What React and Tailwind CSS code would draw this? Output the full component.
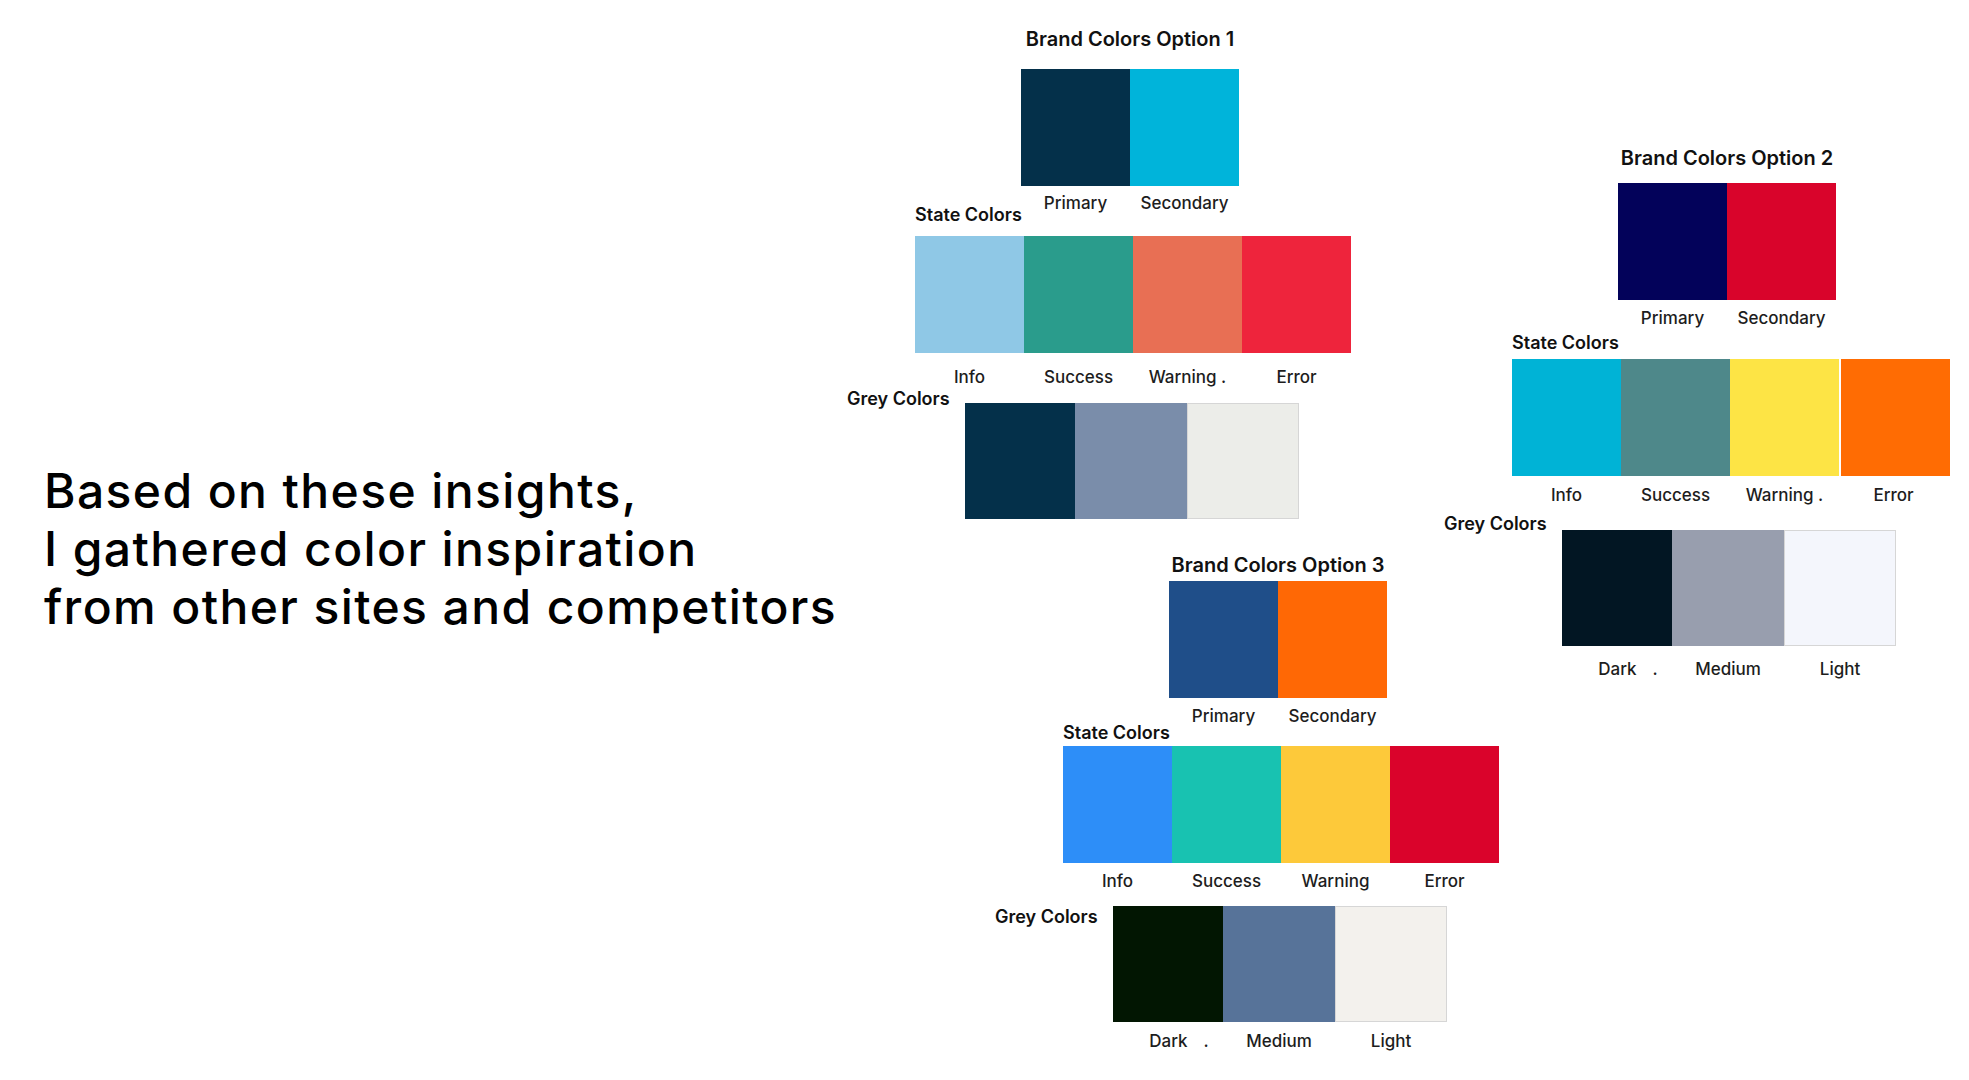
import React from "react";

// palette data, one entry per brand option
const OPTIONS = {
  one: {
    title: "Brand Colors Option 1",
    brand: ["#04304a", "#00b4da"],
    state: ["#8fc8e6", "#2a9c8c", "#e86f54", "#ee243c"],
    grey: ["#04304a", "#7a8daa", "#ecede9"],
    greyLabels: false,
  },
  two: {
    title: "Brand Colors Option 2",
    brand: ["#03025a", "#d9042b"],
    state: ["#00b3d6", "#4e888a", "#fde445", "#ff6c03"],
    grey: ["#021623", "#989eae", "#f4f6fc"],
    greyLabels: true,
  },
  three: {
    title: "Brand Colors Option 3",
    brand: ["#1f4e89", "#ff6805"],
    state: ["#2d8ef8", "#18c2b1", "#fdc93a", "#da032b"],
    grey: ["#021602", "#577399", "#f3f1ed"],
    greyLabels: true,
    plainWarning: true,
  },
};

const Swatch = ({ color, w = "w-[109px]", h = "h-[117px]", light }) => (
  <div
    className={`${w} ${h} shrink-0 ${light ? "border border-[#d6d6d6]" : ""}`}
    style={{ backgroundColor: color }}
  />
);

const Label = ({ children, w = "w-[109px]" }) => (
  <div className={`${w} shrink-0 text-center text-[17px] leading-[22px] font-medium text-[#1d1d1d] whitespace-nowrap`}>
    {children}
  </div>
);

// s = spacing set for each group (they are not perfectly regular on the slide)
const Palette = ({ data, s }) => (
  <div className="flex flex-col">
    {/* title */}
    <div className="ml-[174px] w-[218px] text-center text-[20px] leading-[26px] font-semibold text-[#111] whitespace-nowrap">
      {data.title}
    </div>

    {/* brand */}
    <div className={`ml-[174px] flex ${s.brandMt}`}>
      <Swatch color={data.brand[0]} />
      <Swatch color={data.brand[1]} />
    </div>

    {/* state label + brand labels */}
    <div className={`ml-[68px] flex items-start ${s.rowMt}`}>
      <div className={`w-[106px] shrink-0 text-[18px] leading-[22px] font-semibold text-[#111] whitespace-nowrap ${s.stateLabelPt}`}>
        State Colors
      </div>
      <Label>Primary</Label>
      <Label>Secondary</Label>
    </div>

    {/* state */}
    <div className={`ml-[68px] flex ${s.stateMt}`}>
      <Swatch color={data.state[0]} />
      <Swatch color={data.state[1]} />
      <Swatch color={data.state[2]} />
      <div className={s.errorGap} />
      <Swatch color={data.state[3]} />
    </div>
    <div className={`ml-[68px] flex ${s.stateLabelsMt}`}>
      <Label>Info</Label>
      <Label>Success</Label>
      <Label>{data.plainWarning ? "Warning" : "Warning ."}</Label>
      <Label>Error</Label>
    </div>

    {/* grey */}
    <div className={`flex items-start ${s.greyMt}`}>
      <div className="w-[118px] shrink-0 text-[18px] leading-[22px] font-semibold text-[#111] whitespace-nowrap">
        Grey Colors
      </div>
      <div className={`flex ${s.greySwMt}`}>
        <Swatch color={data.grey[0]} w="w-[110px]" h="h-[116px]" />
        <Swatch color={data.grey[1]} w="w-[112px]" h="h-[116px]" />
        <Swatch color={data.grey[2]} w="w-[112px]" h="h-[116px]" light />
      </div>
    </div>
    {data.greyLabels && (
      <div className={`ml-[118px] flex ${s.greyLabelsMt}`}>
        <Label w="w-[110px]">
          <span className="pl-[22px]">Dark</span>
          <span className="ml-[16px]">.</span>
        </Label>
        <Label w="w-[112px]">Medium</Label>
        <Label w="w-[112px]">Light</Label>
      </div>
    )}
  </div>
);

export default function App() {
  return (
    <div className="w-[1969px] h-[1080px] bg-white flex overflow-hidden font-['Inter','Noto_Sans',sans-serif]">
      {/* headline */}
      <div className="w-[847px] shrink-0 pl-[44px] mt-[462px]">
        <h1 className="text-[48px] leading-[58px] font-medium text-black tracking-[1.4px] whitespace-nowrap">
          Based on these insights,
          <br />
          I gathered color inspiration
          <br />
          from other sites and competitors
        </h1>
      </div>

      {/* option 1 and option 3 */}
      <div className="w-[597px] shrink-0 flex flex-col">
        <div className="mt-[26px]">
          <Palette
            data={OPTIONS.one}
            s={{
              brandMt: "mt-[17px]",
              rowMt: "mt-[6px]",
              stateLabelPt: "pt-[12px]",
              stateMt: "mt-[10px]",
              errorGap: "w-0",
              stateLabelsMt: "mt-[13px]",
              greyMt: "mt-0",
              greySwMt: "mt-[15px]",
              greyLabelsMt: "mt-0",
            }}
          />
        </div>
        <div className="mt-[33px] ml-[148px]">
          <Palette
            data={OPTIONS.three}
            s={{
              brandMt: "mt-[3px]",
              rowMt: "mt-[7px]",
              stateLabelPt: "pt-[17px]",
              stateMt: "mt-[2px]",
              errorGap: "w-0",
              stateLabelsMt: "mt-[7px]",
              greyMt: "mt-[14px]",
              greySwMt: "mt-0",
              greyLabelsMt: "mt-[8px]",
            }}
          />
        </div>
      </div>

      {/* option 2 */}
      <div className="mt-[145px] shrink-0">
        <Palette
          data={OPTIONS.two}
          s={{
            brandMt: "mt-[12px]",
            rowMt: "mt-[7px]",
            stateLabelPt: "pt-[25px]",
            stateMt: "mt-[5px]",
            errorGap: "w-[2px]",
            stateLabelsMt: "mt-[8px]",
            greyMt: "mt-[7px]",
            greySwMt: "mt-[17px]",
            greyLabelsMt: "mt-[12px]",
          }}
        />
      </div>
    </div>
  );
}
